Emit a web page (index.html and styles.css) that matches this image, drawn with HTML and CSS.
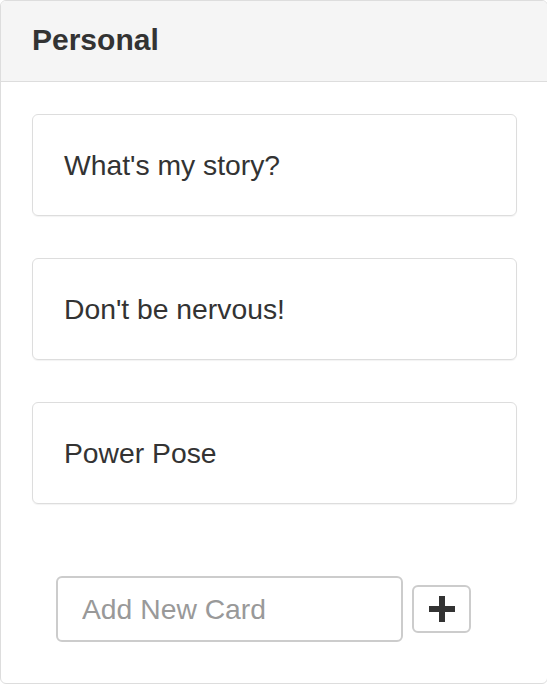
FILE: index.html
```html
<!DOCTYPE html>
<html lang="en">
<head>
<meta charset="utf-8">
<title>Personal</title>
<link rel="stylesheet" href="styles.css">
</head>
<body>
<div class="panel">
  <div class="panel-heading">
    <h3 class="panel-title">Personal</h3>
  </div>
  <div class="panel-body">
    <div class="card-list">
      <div class="card">What's my story?</div>
      <div class="card">Don't be nervous!</div>
      <div class="card">Power Pose</div>
    </div>
    <form class="add-form">
      <input class="add-input" type="text" placeholder="Add New Card">
      <button class="add-btn" type="button" aria-label="Add">
        <svg class="plus" width="26" height="26" viewBox="0 0 26 26"><rect x="10" y="0" width="6" height="26" fill="#333"/><rect x="0" y="10" width="26" height="6" fill="#333"/></svg>
      </button>
    </form>
  </div>
</div>
</body>
</html>
```
FILE: styles.css
```css
html, body {
  margin: 0;
  padding: 0;
  overflow: hidden;
  background: #fff;
}
body {
  font-family: "Liberation Sans", Arial, sans-serif;
  color: #333;
}
.panel {
  width: 548px;
  box-sizing: border-box;
  height: 684px;
  border: 1px solid #ddd;
  border-radius: 6px;
  overflow: hidden;
}
.panel-heading {
  background: #f5f5f5;
  height: 80px;
  border-bottom: 1px solid #ddd;
  padding-left: 31px;
  display: flex;
  align-items: center;
}
.panel-title {
  margin: 0;
  font-size: 30px;
  font-weight: 700;
  line-height: 1;
  margin-top: -2px;
  color: #333;
}
.panel-body {
  padding: 32px 30px 0 31px;
}
.card-list {
  display: flex;
  flex-direction: column;
  gap: 42px;
}
.card {
  height: 100px;
  border: 1px solid #ddd;
  border-radius: 6px;
  box-shadow: 0 1px 1px rgba(0,0,0,0.05);
  padding-left: 31px;
  display: flex;
  align-items: center;
  font-size: 28.3px;
  color: #333;
}
.add-form {
  margin: 72px 0 0 24px;
  display: flex;
  align-items: center;
  gap: 9px;
}
.add-input {
  width: 347px;
  height: 66px;
  box-sizing: border-box;
  border: 2px solid #ccc;
  border-radius: 6px;
  padding: 0 24px;
  font-family: "Liberation Sans", Arial, sans-serif;
  font-size: 28.3px;
  color: #555;
  outline: none;
}
.add-input::placeholder {
  color: #999;
}
.add-btn {
  width: 59px;
  height: 48px;
  box-sizing: border-box;
  border: 2px solid #ccc;
  border-radius: 6px;
  background: #fff;
  padding: 0;
  display: flex;
  align-items: center;
  justify-content: center;
}
.plus {
  display: block;
}
```
